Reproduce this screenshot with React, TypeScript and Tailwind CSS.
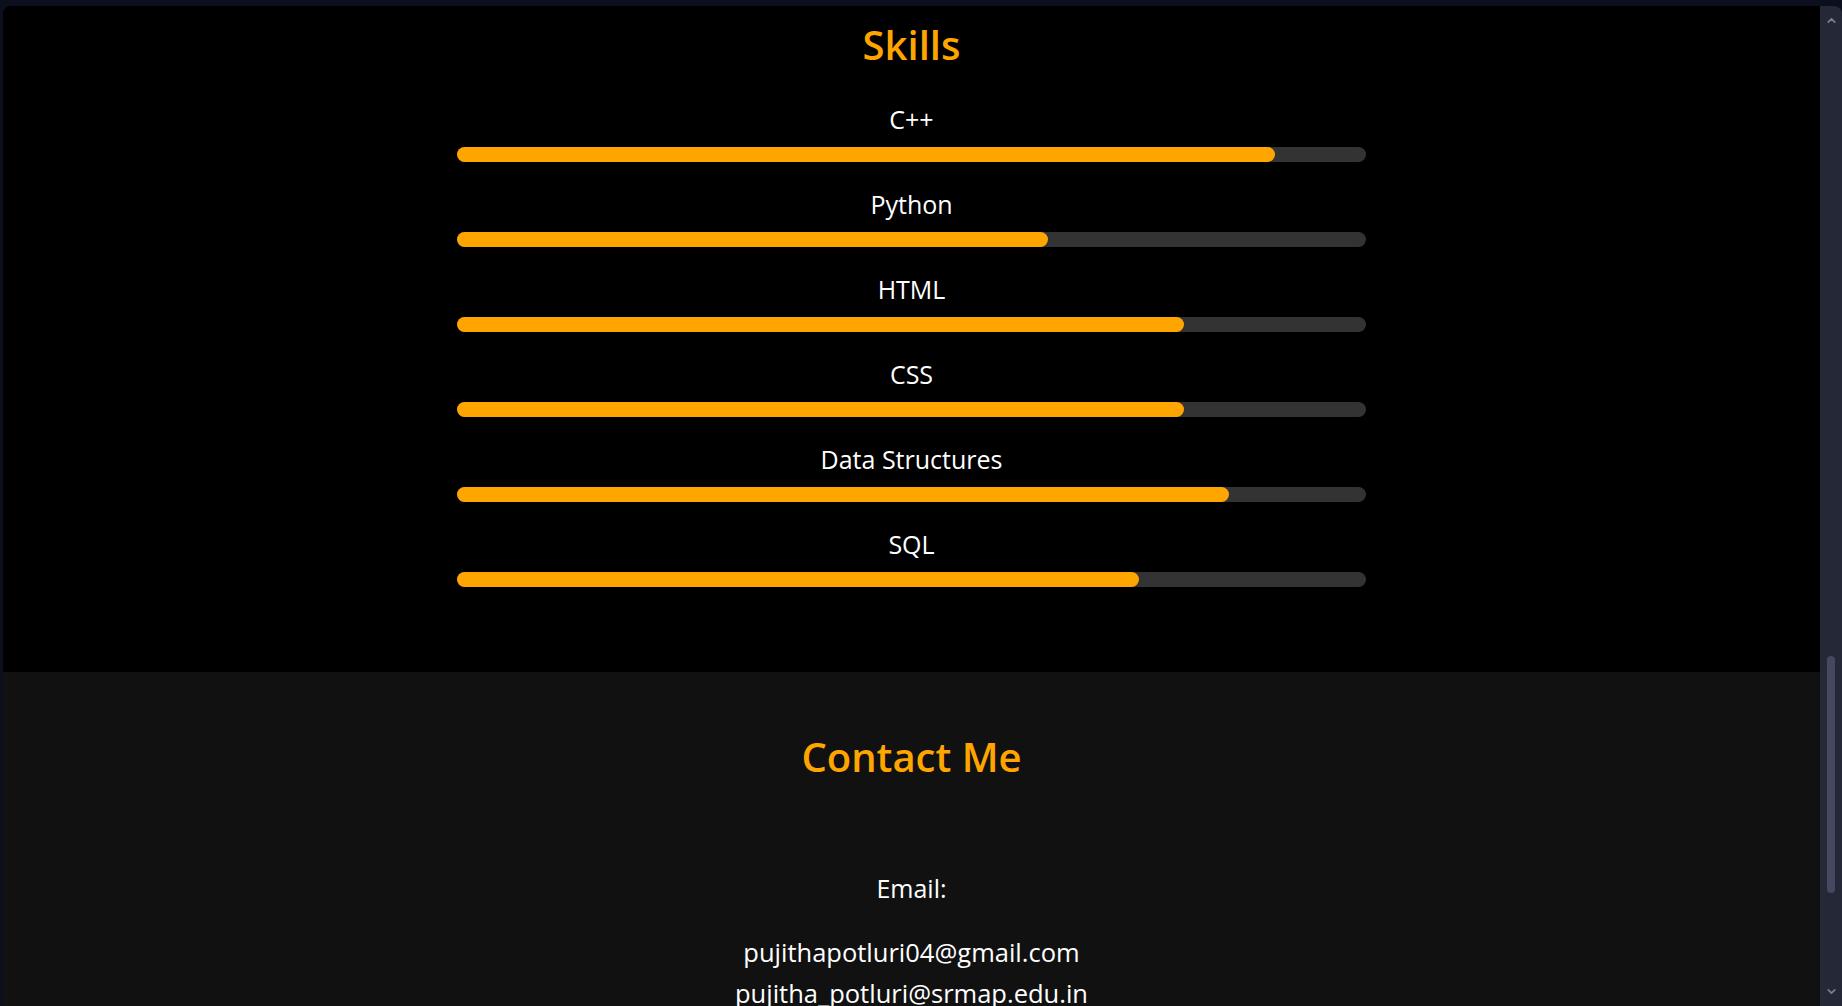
import { ChevronDown, ChevronUp } from "lucide-react";

const skills = [
  { name: "C++", level: 90 },
  { name: "Python", level: 65 },
  { name: "HTML", level: 80 },
  { name: "CSS", level: 80 },
  { name: "Data Structures", level: 85 },
  { name: "SQL", level: 75 },
];

const font = { fontFamily: '"Open Sans", "Noto Sans", sans-serif' };

function SkillBar({ name, level }: { name: string; level: number }) {
  return (
    <div className="flex flex-col items-center">
      <span className="text-[25px] leading-[39px] text-white">{name}</span>
      <div className="mt-[8px] h-[15px] w-1/2 rounded-full bg-[#333333]">
        <div
          className="h-full rounded-full bg-[#ffa500]"
          style={{ width: `${level}%` }}
        />
      </div>
    </div>
  );
}

function App() {
  return (
    <div
      className="flex h-[1006px] w-[1842px] overflow-hidden bg-[#0b0f1e] pl-[3px] pt-[6px]"
      style={font}
    >
      <main className="flex flex-1 flex-col overflow-hidden rounded-tl-lg">
        <section className="flex flex-col bg-black pt-[14px] pb-[85px]">
          <h2 className="text-center text-[40px] font-semibold leading-[50px] text-[#ffa500]">
            Skills
          </h2>
          <div className="mt-[30px] flex flex-col gap-[23px]">
            {skills.map((s) => (
              <SkillBar key={s.name} name={s.name} level={s.level} />
            ))}
          </div>
        </section>
        <section className="flex flex-1 flex-col items-center bg-[#111111] pt-[60px]">
          <h2 className="text-[40px] font-semibold leading-[50px] text-[#ffa500]">
            Contact Me
          </h2>
          <p className="mt-[87px] text-[25px] leading-[39px] text-white">Email:</p>
          <p className="mt-[24px] text-center text-[25.5px] leading-[41px] text-white">
            pujithapotluri04@gmail.com
            <br />
            pujitha_potluri@srmap.edu.in
          </p>
        </section>
      </main>
      <div className="flex w-[22px] flex-col items-center rounded-tr-lg bg-[#252836] pt-[8px] pb-[8px]">
        <ChevronUp size={13} strokeWidth={3} className="text-[#7d8090]" />
        <div className="flex-1" />
        <div className="mb-[92px] h-[237px] w-[8px] rounded-full bg-[#45485f]" />
        <ChevronDown size={13} strokeWidth={3} className="text-[#7d8090]" />
      </div>
    </div>
  );
}

export default App;
